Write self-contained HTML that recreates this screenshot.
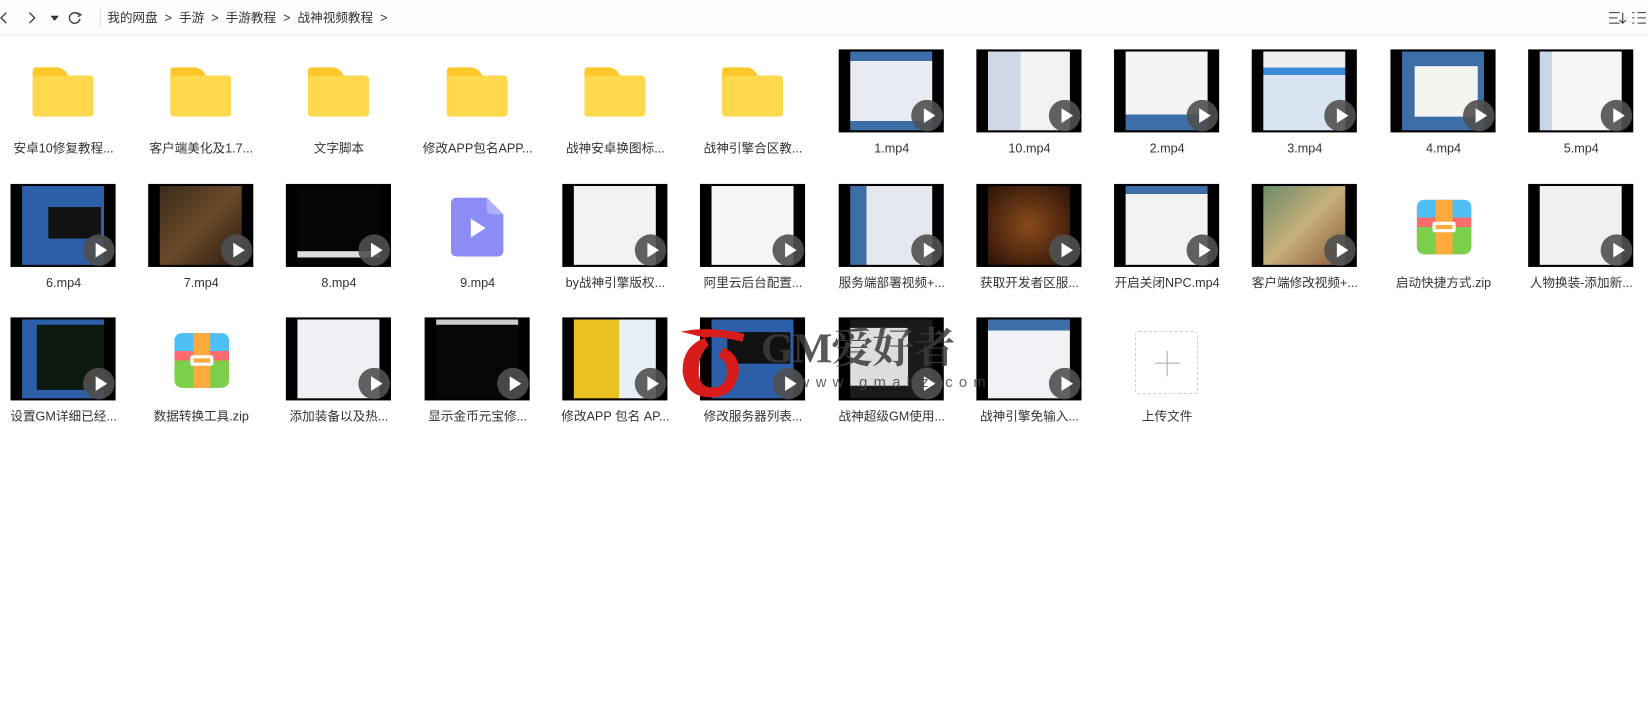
<!DOCTYPE html><html><head><meta charset="utf-8"><style>
*{margin:0;padding:0;box-sizing:border-box}
body{width:1648px;height:715px;background:#fff;font-family:"Liberation Sans","Noto Sans CJK SC",sans-serif;position:relative;overflow:hidden;color:#333}
#w{position:absolute;left:0;top:0;width:1568px;height:680px;transform:scale(1.051);transform-origin:0 0}
.top{position:absolute;left:0;top:0;width:1568px;height:34px;background:#fdfdfd;border-bottom:1px solid #ececec}
.crumb{position:absolute;top:9px;font-size:12px;line-height:16px;color:#333}
.it{position:absolute;width:131px}
.lb{position:absolute;top:86px;left:0;width:131px;text-align:center;font-size:12px;line-height:16px;height:16px;color:#333;white-space:nowrap}
.th{position:absolute;left:15px;top:0;width:100px;height:79px;background:#000;overflow:hidden}
.in{position:absolute;left:11px;top:2px;width:78px;height:75px}
.pl{position:absolute;left:69px;top:48px;width:30px;height:30px;border-radius:50%;background:rgba(80,80,80,.9)}
.pl:after{content:"";position:absolute;left:12px;top:8px;border-left:11px solid #fff;border-top:7px solid transparent;border-bottom:7px solid transparent}
.fd{position:absolute;left:36px;top:17px;width:58px;height:47px}
</style></head><body><div id="w">
<div class="top">
<svg style="position:absolute;left:0;top:10px" width="80" height="14"><path d="M6 2 L1 7 L6 12" fill="none" stroke="#444" stroke-width="1.3"/><path d="M28 2 L33 7 L28 12" fill="none" stroke="#444" stroke-width="1.3"/><path d="M48 5 L56 5 L52 10Z" fill="#333"/><path d="M75 4 A5 5 0 1 0 76 8" fill="none" stroke="#444" stroke-width="1.4"/><path d="M73 2 L77 4 L74 6" fill="none" stroke="#444" stroke-width="1.3"/></svg>
<div style="position:absolute;left:95px;top:8px;width:1px;height:18px;background:#ddd"></div>
<div class="crumb" style="left:102px">我的网盘 &nbsp;&gt;&nbsp; 手游 &nbsp;&gt;&nbsp; 手游教程 &nbsp;&gt;&nbsp; 战神视频教程 &nbsp;&gt;</div>
<svg style="position:absolute;left:1530px;top:10px" width="38" height="14"><path d="M1 2H11M1 7H9M1 12H11" stroke="#333"/><path d="M14 2V12M11 9L14 12L17 9" fill="none" stroke="#333"/><path d="M23 2H25M23 7H25M23 12H25M28 2H36M28 7H36M28 12H36" stroke="#333"/></svg>
</div>

<div class="it" style="left:-5px;top:47px"><svg class="fd" viewBox="0 0 58 47"><path d="M0 4Q0 0 4 0H22Q30 0 34 8H54Q58 8 58 12V43Q58 47 54 47H4Q0 47 0 43Z" fill="#ffc72a"/><rect x="0" y="8" width="58" height="39" rx="4" fill="#ffd84d"/></svg><div class="lb">安卓10修复教程...</div></div>
<div class="it" style="left:126px;top:47px"><svg class="fd" viewBox="0 0 58 47"><path d="M0 4Q0 0 4 0H22Q30 0 34 8H54Q58 8 58 12V43Q58 47 54 47H4Q0 47 0 43Z" fill="#ffc72a"/><rect x="0" y="8" width="58" height="39" rx="4" fill="#ffd84d"/></svg><div class="lb">客户端美化及1.7...</div></div>
<div class="it" style="left:257px;top:47px"><svg class="fd" viewBox="0 0 58 47"><path d="M0 4Q0 0 4 0H22Q30 0 34 8H54Q58 8 58 12V43Q58 47 54 47H4Q0 47 0 43Z" fill="#ffc72a"/><rect x="0" y="8" width="58" height="39" rx="4" fill="#ffd84d"/></svg><div class="lb">文字脚本</div></div>
<div class="it" style="left:389px;top:47px"><svg class="fd" viewBox="0 0 58 47"><path d="M0 4Q0 0 4 0H22Q30 0 34 8H54Q58 8 58 12V43Q58 47 54 47H4Q0 47 0 43Z" fill="#ffc72a"/><rect x="0" y="8" width="58" height="39" rx="4" fill="#ffd84d"/></svg><div class="lb">修改APP包名APP...</div></div>
<div class="it" style="left:520px;top:47px"><svg class="fd" viewBox="0 0 58 47"><path d="M0 4Q0 0 4 0H22Q30 0 34 8H54Q58 8 58 12V43Q58 47 54 47H4Q0 47 0 43Z" fill="#ffc72a"/><rect x="0" y="8" width="58" height="39" rx="4" fill="#ffd84d"/></svg><div class="lb">战神安卓换图标...</div></div>
<div class="it" style="left:651px;top:47px"><svg class="fd" viewBox="0 0 58 47"><path d="M0 4Q0 0 4 0H22Q30 0 34 8H54Q58 8 58 12V43Q58 47 54 47H4Q0 47 0 43Z" fill="#ffc72a"/><rect x="0" y="8" width="58" height="39" rx="4" fill="#ffd84d"/></svg><div class="lb">战神引擎合区教...</div></div>

<div class="it" style="left:783px;top:47px"><div class="th"><div class="in" style="background:linear-gradient(#3d6ea8 0 12%,#e8ecf2 12% 88%,#3d6ea8 88%)"></div><div class="pl"></div></div><div class="lb">1.mp4</div></div>
<div class="it" style="left:914px;top:47px"><div class="th"><div class="in" style="background:linear-gradient(90deg,#cfd8e6 0 40%,#f2f2f2 40%)"></div><div class="pl"></div></div><div class="lb">10.mp4</div></div>
<div class="it" style="left:1045px;top:47px"><div class="th"><div class="in" style="background:linear-gradient(#f4f4f4 0 80%,#3d6ea8 80%)"></div><div class="pl"></div></div><div class="lb">2.mp4</div></div>
<div class="it" style="left:1176px;top:47px"><div class="th"><div class="in" style="background:linear-gradient(#eee 0 20%,#3d8ad8 20% 30%,#d8e4f2 30%)"></div><div class="pl"></div></div><div class="lb">3.mp4</div></div>
<div class="it" style="left:1308px;top:47px"><div class="th"><div class="in" style="background:#3d6ea8"><div style="position:absolute;left:12px;top:14px;width:60px;height:48px;background:#f4f4f0"></div></div><div class="pl"></div></div><div class="lb">4.mp4</div></div>
<div class="it" style="left:1439px;top:47px"><div class="th"><div class="in" style="background:linear-gradient(90deg,#c9d6e8 0 15%,#f6f6f6 15%)"></div><div class="pl"></div></div><div class="lb">5.mp4</div></div>

<div class="it" style="left:-5px;top:175px"><div class="th"><div class="in" style="background:#2d5fa8"><div style="position:absolute;left:25px;top:20px;width:50px;height:30px;background:#111"></div></div><div class="pl"></div></div><div class="lb">6.mp4</div></div>
<div class="it" style="left:126px;top:175px"><div class="th"><div class="in" style="background:linear-gradient(135deg,#3a2a1a,#6a4a2a 50%,#2a1a10)"></div><div class="pl"></div></div><div class="lb">7.mp4</div></div>
<div class="it" style="left:257px;top:175px"><div class="th"><div class="in" style="background:#050505"><div style="position:absolute;left:0;top:62px;width:78px;height:6px;background:#ddd"></div></div><div class="pl"></div></div><div class="lb">8.mp4</div></div>
<div class="it" style="left:389px;top:175px"><svg style="position:absolute;left:40px;top:13px" width="50" height="56" viewBox="0 0 50 56"><path d="M6 0H34L50 16V50Q50 56 44 56H6Q0 56 0 50V6Q0 0 6 0Z" fill="#8c8cf6"/><path d="M34 0L50 16H40Q34 16 34 10Z" fill="#b0b0fa"/><path d="M19 20L33 29L19 38Z" fill="#fff"/></svg><div class="lb">9.mp4</div></div>
<div class="it" style="left:520px;top:175px"><div class="th"><div class="in" style="background:#f2f2f2"></div><div class="pl"></div></div><div class="lb">by战神引擎版权...</div></div>
<div class="it" style="left:651px;top:175px"><div class="th"><div class="in" style="background:#f6f6f6"></div><div class="pl"></div></div><div class="lb">阿里云后台配置...</div></div>
<div class="it" style="left:783px;top:175px"><div class="th"><div class="in" style="background:linear-gradient(90deg,#3d6ea8 0 20%,#e4e8ee 20%)"></div><div class="pl"></div></div><div class="lb">服务端部署视频+...</div></div>
<div class="it" style="left:914px;top:175px"><div class="th"><div class="in" style="background:radial-gradient(#8a4a1a,#2a1208)"></div><div class="pl"></div></div><div class="lb">获取开发者区服...</div></div>
<div class="it" style="left:1045px;top:175px"><div class="th"><div class="in" style="background:linear-gradient(#3d6ea8 0 10%,#f2f2f2 10%)"></div><div class="pl"></div></div><div class="lb">开启关闭NPC.mp4</div></div>
<div class="it" style="left:1176px;top:175px"><div class="th"><div class="in" style="background:linear-gradient(135deg,#6a8a6a,#c8b07a 50%,#8a5a3a)"></div><div class="pl"></div></div><div class="lb">客户端修改视频+...</div></div>
<div class="it" style="left:1308px;top:175px"><svg style="position:absolute;left:40px;top:15px" width="52" height="52" viewBox="0 0 52 52"><rect width="52" height="52" rx="8" fill="#fc6c6c"/><path d="M0 26H52V44Q52 52 44 52H8Q0 52 0 44Z" fill="#7ccf4a"/><path d="M8 0H44Q52 0 52 8V17H0V8Q0 0 8 0Z" fill="#4fc0f5"/><rect x="18" y="0" width="16" height="52" fill="#ffaa3a"/><rect x="15" y="21" width="22" height="10" rx="2" fill="#fff"/><rect x="18" y="24" width="16" height="4" fill="#ffaa3a"/></svg><div class="lb">启动快捷方式.zip</div></div>
<div class="it" style="left:1439px;top:175px"><div class="th"><div class="in" style="background:#f0f0f0"></div><div class="pl"></div></div><div class="lb">人物换装-添加新...</div></div>

<div class="it" style="left:-5px;top:302px"><div class="th"><div class="in" style="background:#2d5fa8"><div style="position:absolute;left:14px;top:5px;width:64px;height:62px;background:#0c1a10"></div></div><div class="pl"></div></div><div class="lb">设置GM详细已经...</div></div>
<div class="it" style="left:126px;top:302px"><svg style="position:absolute;left:40px;top:15px" width="52" height="52" viewBox="0 0 52 52"><rect width="52" height="52" rx="8" fill="#fc6c6c"/><path d="M0 26H52V44Q52 52 44 52H8Q0 52 0 44Z" fill="#7ccf4a"/><path d="M8 0H44Q52 0 52 8V17H0V8Q0 0 8 0Z" fill="#4fc0f5"/><rect x="18" y="0" width="16" height="52" fill="#ffaa3a"/><rect x="15" y="21" width="22" height="10" rx="2" fill="#fff"/><rect x="18" y="24" width="16" height="4" fill="#ffaa3a"/></svg><div class="lb">数据转换工具.zip</div></div>
<div class="it" style="left:257px;top:302px"><div class="th"><div class="in" style="background:#eef0f4"></div><div class="pl"></div></div><div class="lb">添加装备以及热...</div></div>
<div class="it" style="left:389px;top:302px"><div class="th"><div class="in" style="background:#060606"><div style="position:absolute;left:0;top:0;width:78px;height:5px;background:#ccc"></div></div><div class="pl"></div></div><div class="lb">显示金币元宝修...</div></div>
<div class="it" style="left:520px;top:302px"><div class="th"><div class="in" style="background:linear-gradient(90deg,#e8c020 0 55%,#e8eef6 55%)"></div><div class="pl"></div></div><div class="lb">修改APP 包名 AP...</div></div>
<div class="it" style="left:651px;top:302px"><div class="th"><div class="in" style="background:#2d5fa8"><div style="position:absolute;left:15px;top:12px;width:60px;height:30px;background:#111"></div></div><div class="pl"></div></div><div class="lb">修改服务器列表...</div></div>
<div class="it" style="left:783px;top:302px"><div class="th"><div class="in" style="background:#1a1a1a"><div style="position:absolute;left:0;top:8px;width:55px;height:55px;background:#ddd"></div></div><div class="pl"></div></div><div class="lb">战神超级GM使用...</div></div>
<div class="it" style="left:914px;top:302px"><div class="th"><div class="in" style="background:linear-gradient(#3d6ea8 0 14%,#f0f2f6 14%)"></div><div class="pl"></div></div><div class="lb">战神引擎免输入...</div></div>
<div class="it" style="left:1045px;top:302px"><div style="position:absolute;left:35px;top:13px;width:60px;height:60px;border:1px dashed #ccc;border-radius:3px"><div style="position:absolute;left:18px;top:29px;width:24px;height:1px;background:#aaa"></div><div style="position:absolute;left:29px;top:18px;width:1px;height:24px;background:#aaa"></div></div><div class="lb">上传文件</div></div>

<svg style="position:absolute;left:645px;top:308px" width="68" height="72" viewBox="0 0 70 76"><path d="M2 8Q30 2 66 10L64 18Q40 12 26 14Z" fill="#d81c1c"/><path d="M26 14Q2 24 4 50Q8 74 32 74Q56 74 60 50Q62 30 44 24L40 34Q50 38 48 52Q46 64 34 64Q20 64 20 48Q20 30 30 22Z" fill="#d81c1c"/></svg>
<div style="position:absolute;left:724px;top:310px;font-family:'Liberation Serif','Noto Serif CJK SC',serif;font-size:40px;line-height:44px;font-weight:bold;color:rgba(60,60,60,.85);letter-spacing:-1px">GM爱好者</div>
<div style="position:absolute;left:760px;top:355px;font-size:14px;line-height:16px;color:rgba(70,70,70,.85);letter-spacing:6px">www.gmahz.com</div>
</div></body></html>
